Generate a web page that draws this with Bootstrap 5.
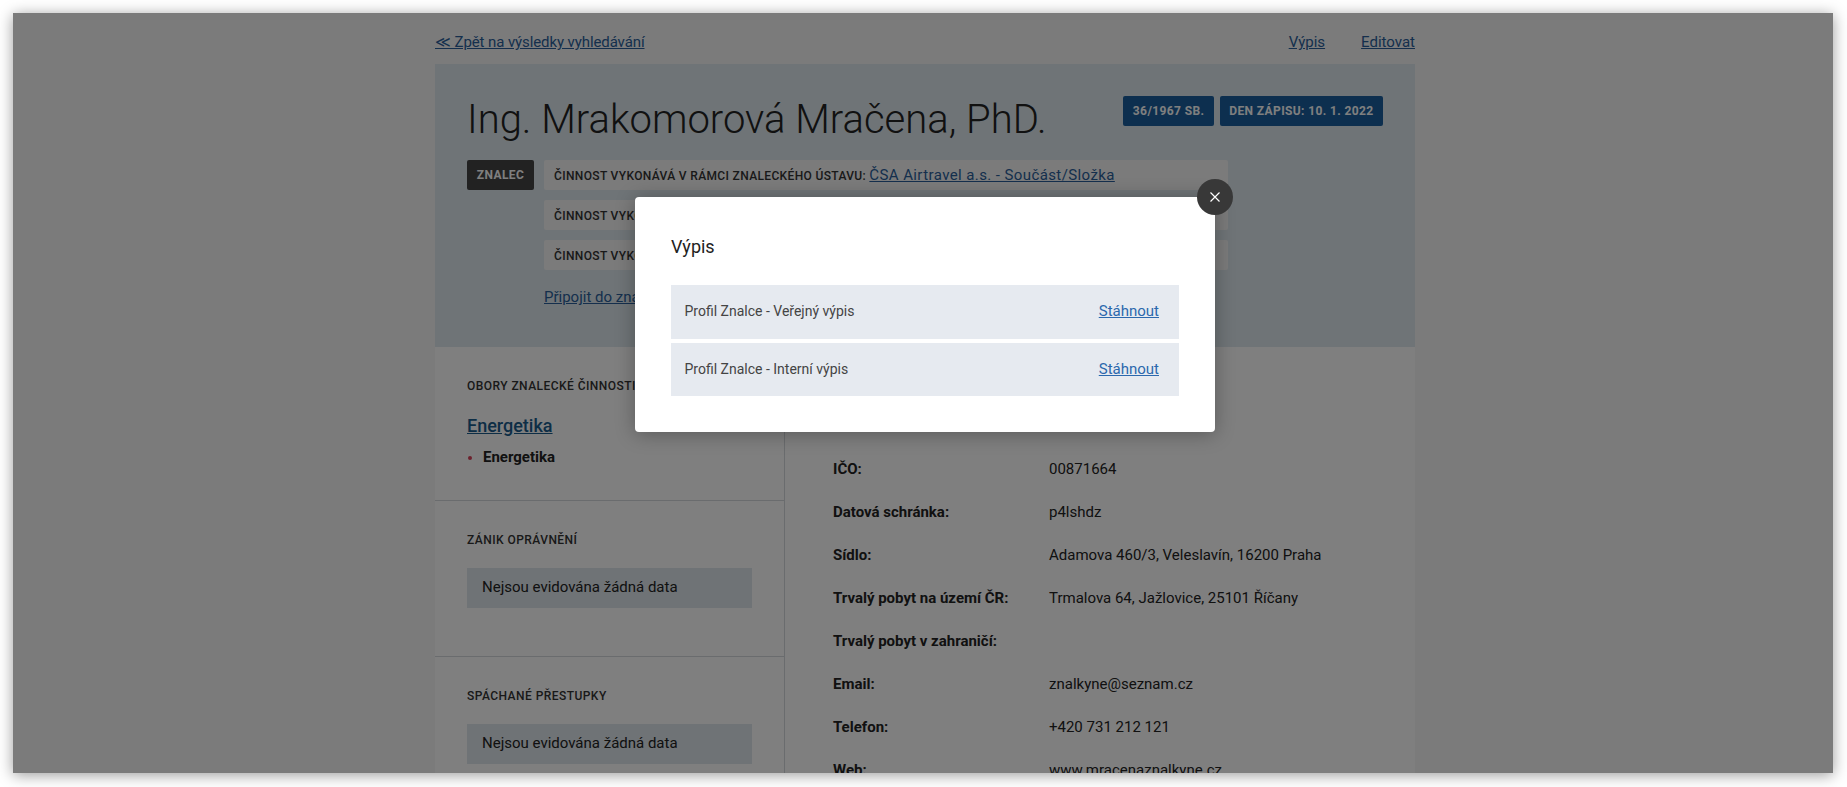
<!DOCTYPE html>
<html lang="cs">
<head>
  <meta charset="UTF-8">
  <title>Profil znalce</title>
  <link href="https://cdn.jsdelivr.net/npm/bootstrap@5.3.0/dist/css/bootstrap.min.css" rel="stylesheet">
  <style>
    html, body {
      height: 100%;
      overflow: hidden;
    }
    body {
      padding: 13px 14px 14px 13px;
      background-color: #fff;
      font-family: Roboto, "Liberation Sans", sans-serif;
      font-size: 15px;
      color: #222;
    }
    a {
      color: #2b68ad;
    }
    .app-window {
      position: relative;
      height: 100%;
      overflow: hidden;
      background-color: #f6f6f6;
      box-shadow: 0 2px 14px rgba(0,0,0,.4);
    }
    .page-inner {
      width: 1824px;
    }
    .profile-wrap {
      width: 980px;
    }
    .top-links {
      height: 51px;
      padding-top: 19px;
      font-size: 15px;
      line-height: 20px;
    }
    .top-links a, .join-link, .activity-row a {
      color: #2a5f9a;
    }
    .top-links .gap-links {
      gap: 36px;
    }
    .back-link {
      letter-spacing: -.1px;
    }
    .profile-head {
      height: 283px;
      padding: 32px;
      background-color: #dee8ee;
    }
    .profile-name {
      margin: 0;
      font-size: 40px;
      font-weight: 300;
      line-height: 48px;
    }
    .tag-blue, .tag-dark {
      height: 30px;
      padding: 0 9.5px;
      border-radius: 2px;
      color: #fff;
      font-size: 12px;
      font-weight: 700;
      letter-spacing: .38px;
      line-height: 30px;
      text-transform: uppercase;
    }
    .tag-gap {
      gap: 6px;
    }
    .tag-blue {
      background-color: #1a5f9f;
    }
    .tag-dark {
      width: 67px;
      padding: 0;
      background-color: #444;
      text-align: center;
    }
    .head-rows {
      margin-top: 16px;
      gap: 10px;
    }
    .activity-list {
      width: 684px;
    }
    .activity-row {
      height: 30px;
      padding-left: 10px;
      margin-bottom: 10px;
      border-radius: 2px;
      background-color: #f6f6f6;
      color: #333;
      font-size: 12px;
      font-weight: 500;
      letter-spacing: .35px;
      line-height: 30px;
      text-transform: uppercase;
    }
    .activity-row + .activity-row {
      line-height: 32px;
    }
    .activity-row a {
      font-size: 15px;
      font-weight: 400;
      letter-spacing: .4px;
      text-transform: none;
    }
    .join-link {
      display: block;
      margin-top: 17px;
      font-size: 15px;
      line-height: 20px;
    }
    .profile-body {
      background-color: #fff;
    }
    .side-col {
      width: 350px;
      flex-shrink: 0;
      border-right: 1px solid #d4d8dc;
    }
    .side-block {
      padding: 30px 32px 0;
      border-bottom: 1px solid #d4d8dc;
    }
    .side-block:first-child {
      height: 154px;
    }
    .side-block + .side-block {
      height: 156px;
    }
    .side-block:last-child {
      border-bottom: 0;
    }
    .side-title {
      margin: 0;
      color: #333;
      font-size: 12px;
      font-weight: 500;
      letter-spacing: .45px;
      line-height: 18px;
      text-transform: uppercase;
    }
    .obor-link {
      display: block;
      margin-top: 19px;
      color: #1b5c8c;
      font-size: 18px;
      font-weight: 500;
      line-height: 24px;
    }
    .obor-item {
      margin-top: 8px;
      padding-left: 16px;
      font-weight: 700;
      line-height: 22px;
    }
    .obor-dot {
      width: 4px;
      height: 4px;
      margin: 0 11px 0 -15px;
      display: inline-block;
      vertical-align: 2px;
      border-radius: 50%;
      background-color: #d9435a;
    }
    .empty-box {
      height: 40px;
      margin-top: 19px;
      padding-left: 15px;
      background-color: #dfe6ec;
      font-size: 15px;
      line-height: 39px;
    }
    .info-col {
      padding: 112px 0 0 48px;
    }
    .info-row {
      margin-bottom: 22px;
      line-height: 21px;
    }
    .info-label {
      width: 216px;
      font-weight: 700;
    }
    .dim-layer {
      position: absolute;
      inset: 0;
      background-color: rgba(0,0,0,.5);
    }
    .vypis-modal {
      position: absolute;
      left: 622px;
      top: 184px;
      width: 580px;
      height: 235px;
      padding: 35px 36px;
      border: 0;
      border-radius: 4px;
      background-color: #fff;
      box-shadow: 0 2px 20px rgba(0,0,0,.3);
    }
    .vypis-title {
      margin: 0;
      font-size: 18px;
      font-weight: 400;
      line-height: 30px;
    }
    .vypis-rows {
      margin-top: 23px;
      gap: 4px;
    }
    .vypis-row {
      height: 54px;
      padding: 0 20px 2px 13.5px;
      background-color: #e6eaf0;
      color: #444;
      font-size: 14px;
    }
    .vypis-row:last-child {
      height: 53px;
      padding-bottom: 1px;
    }
    .vypis-row a {
      font-size: 15px;
    }
    .close-round {
      position: absolute;
      right: -18px;
      top: -18px;
      width: 36px;
      height: 36px;
      padding: 0;
      border: 0;
      border-radius: 50%;
      background-color: #383838;
    }
  </style>
</head>
<body>
  <div class="app-window">
    <div class="page-inner">
      <div class="profile-wrap mx-auto">

        <div class="top-links d-flex justify-content-between">
          <a class="back-link" href="#">≪ Zpět na výsledky vyhledávání</a>
          <div class="d-flex gap-links">
            <a href="#">Výpis</a>
            <a href="#">Editovat</a>
          </div>
        </div>

        <div class="profile-head">
          <div class="d-flex justify-content-between align-items-start">
            <h1 class="profile-name">Ing. Mrakomorová Mračena, PhD.</h1>
            <div class="d-flex tag-gap">
              <div class="tag-blue">36/1967 Sb.</div>
              <div class="tag-blue">Den zápisu: 10. 1. 2022</div>
            </div>
          </div>
          <div class="head-rows d-flex">
            <div class="tag-dark">Znalec</div>
            <div class="activity-list">
              <div class="activity-row">Činnost vykonává v rámci znaleckého ústavu: <a href="#">ČSA Airtravel a.s. - Součást/Složka</a></div>
              <div class="activity-row">Činnost vykonává v rámci znaleckého ústavu:</div>
              <div class="activity-row">Činnost vykonává v rámci znaleckého ústavu:</div>
              <a class="join-link" href="#">Připojit do znaleckého ústavu</a>
            </div>
          </div>
        </div>

        <div class="profile-body d-flex">
          <div class="side-col">
            <div class="side-block">
              <h2 class="side-title">Obory znalecké činnosti</h2>
              <a class="obor-link" href="#">Energetika</a>
              <div class="obor-item"><span class="obor-dot"></span>Energetika</div>
            </div>
            <div class="side-block">
              <h2 class="side-title">Zánik oprávnění</h2>
              <div class="empty-box">Nejsou evidována žádná data</div>
            </div>
            <div class="side-block">
              <h2 class="side-title">Spáchané přestupky</h2>
              <div class="empty-box">Nejsou evidována žádná data</div>
            </div>
          </div>
          <div class="info-col flex-grow-1">
            <div class="info-row d-flex"><div class="info-label">IČO:</div><div>00871664</div></div>
            <div class="info-row d-flex"><div class="info-label">Datová schránka:</div><div>p4lshdz</div></div>
            <div class="info-row d-flex"><div class="info-label">Sídlo:</div><div>Adamova 460/3, Veleslavín, 16200 Praha</div></div>
            <div class="info-row d-flex"><div class="info-label">Trvalý pobyt na území ČR:</div><div>Trmalova 64, Jažlovice, 25101 Říčany</div></div>
            <div class="info-row d-flex"><div class="info-label">Trvalý pobyt v zahraničí:</div><div></div></div>
            <div class="info-row d-flex"><div class="info-label">Email:</div><div>znalkyne@seznam.cz</div></div>
            <div class="info-row d-flex"><div class="info-label">Telefon:</div><div>+420 731 212 121</div></div>
            <div class="info-row d-flex"><div class="info-label">Web:</div><div>www.mracenaznalkyne.cz</div></div>
          </div>
        </div>

      </div>
    </div>

    <div class="dim-layer"></div>

    <div class="vypis-modal modal-content">
      <button type="button" class="close-round d-flex align-items-center justify-content-center" aria-label="Zavřít">
        <svg width="10" height="10" viewBox="0 0 10 10"><path d="M.5.5l9 9M9.5.5l-9 9" stroke="#fff" stroke-width="1.2" fill="none"/></svg>
      </button>
      <h5 class="vypis-title">Výpis</h5>
      <div class="vypis-rows d-flex flex-column">
        <div class="vypis-row d-flex justify-content-between align-items-center">
          <span>Profil Znalce - Veřejný výpis</span><a href="#">Stáhnout</a>
        </div>
        <div class="vypis-row d-flex justify-content-between align-items-center">
          <span>Profil Znalce - Interní výpis</span><a href="#">Stáhnout</a>
        </div>
      </div>
    </div>
  </div>

  <script src="https://cdn.jsdelivr.net/npm/bootstrap@5.3.0/dist/js/bootstrap.bundle.min.js"></script>
</body>
</html>
